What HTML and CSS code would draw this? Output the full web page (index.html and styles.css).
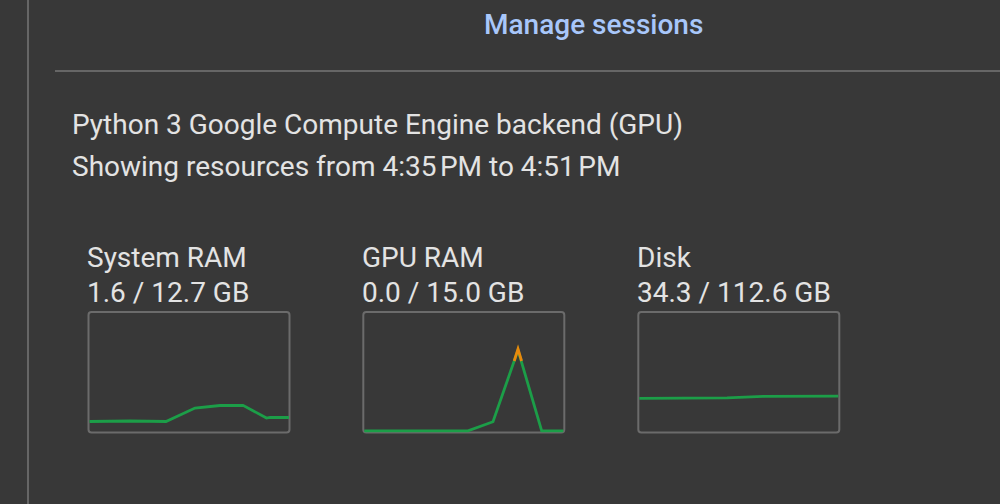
FILE: index.html
```html
<!DOCTYPE html>
<html>
<head>
<meta charset="utf-8">
<link rel="stylesheet" href="styles.css">
</head>
<body>
<div class="panel">
  <div class="header">
    <span class="manage">Manage sessions</span>
  </div>
  <div class="rule"></div>
  <div class="info">
    <div class="line">Python 3 Google Compute Engine backend (GPU)</div>
    <div class="line">Showing resources from 4:35&#8239;PM to 4:51&#8239;PM</div>
  </div>
  <div class="charts">
    <div class="chart">
      <div class="label">System RAM</div>
      <div class="value">1.6 / 12.7 GB</div>
      <svg class="graph" width="204" height="123" viewBox="87 311 204 123">
        <rect x="88.5" y="312" width="201" height="120.5" rx="3" fill="none" stroke="#6b6b6b" stroke-width="2"/>
        <polyline points="89.5,421.5 130,421 166,421.5 195,408 220,405.5 243,405.3 266.5,418 270,417.3 289,417.5" fill="none" stroke="#1c9e48" stroke-width="2.8"/>
      </svg>
    </div>
    <div class="chart">
      <div class="label">GPU RAM</div>
      <div class="value">0.0 / 15.0 GB</div>
      <svg class="graph" width="204" height="123" viewBox="362 311 204 123">
        <rect x="363.3" y="312" width="201" height="120.5" rx="3" fill="none" stroke="#6b6b6b" stroke-width="2"/>
        <polyline points="364.3,430.8 468,430.8 493,421.7 518,350 541.7,430.8 563.3,430.8" fill="none" stroke="#1c9e48" stroke-width="2.8"/>
        <polyline points="514.2,361 518,349 521.6,361" fill="none" stroke="#e8890c" stroke-width="2.8"/>
      </svg>
    </div>
    <div class="chart">
      <div class="label">Disk</div>
      <div class="value">34.3 / 112.6 GB</div>
      <svg class="graph" width="204" height="123" viewBox="637 311 204 123">
        <rect x="638.3" y="312" width="201" height="120.5" rx="3" fill="none" stroke="#6b6b6b" stroke-width="2"/>
        <polyline points="639.3,398.3 727,397.8 763,396.3 838.3,396.2" fill="none" stroke="#1c9e48" stroke-width="2.8"/>
      </svg>
    </div>
  </div>
</div>
</body>
</html>
```
FILE: styles.css
```css
html, body {
  margin: 0;
  padding: 0;
  background: #383838;
  height: 100%;
  overflow: hidden;
}
body {
  font-family: Roboto, "Noto Sans", sans-serif;
  color: #e3e3e3;
}
.panel {
  margin-left: 27px;
  border-left: 2px solid #666666;
  height: 504px;
}
.header {
  height: 70px;
  padding-left: 455px;
  box-sizing: border-box;
  padding-top: 11px;
  line-height: 28px;
}
.manage {
  color: #a8c7fa;
  font-size: 28px;
  font-weight: 500;
}
.rule {
  margin-left: 26px;
  height: 2px;
  background: #666666;
}
.info {
  padding-left: 43px;
  padding-top: 32px;
  font-size: 28px;
  line-height: 42px;
}
.charts {
  display: flex;
  padding-left: 58px;
  padding-top: 52px;
}
.chart {
  width: 275px;
}
.label, .value {
  font-size: 28px;
  line-height: 35px;
}
.graph {
  display: block;
  margin-top: 1px;
}
```
